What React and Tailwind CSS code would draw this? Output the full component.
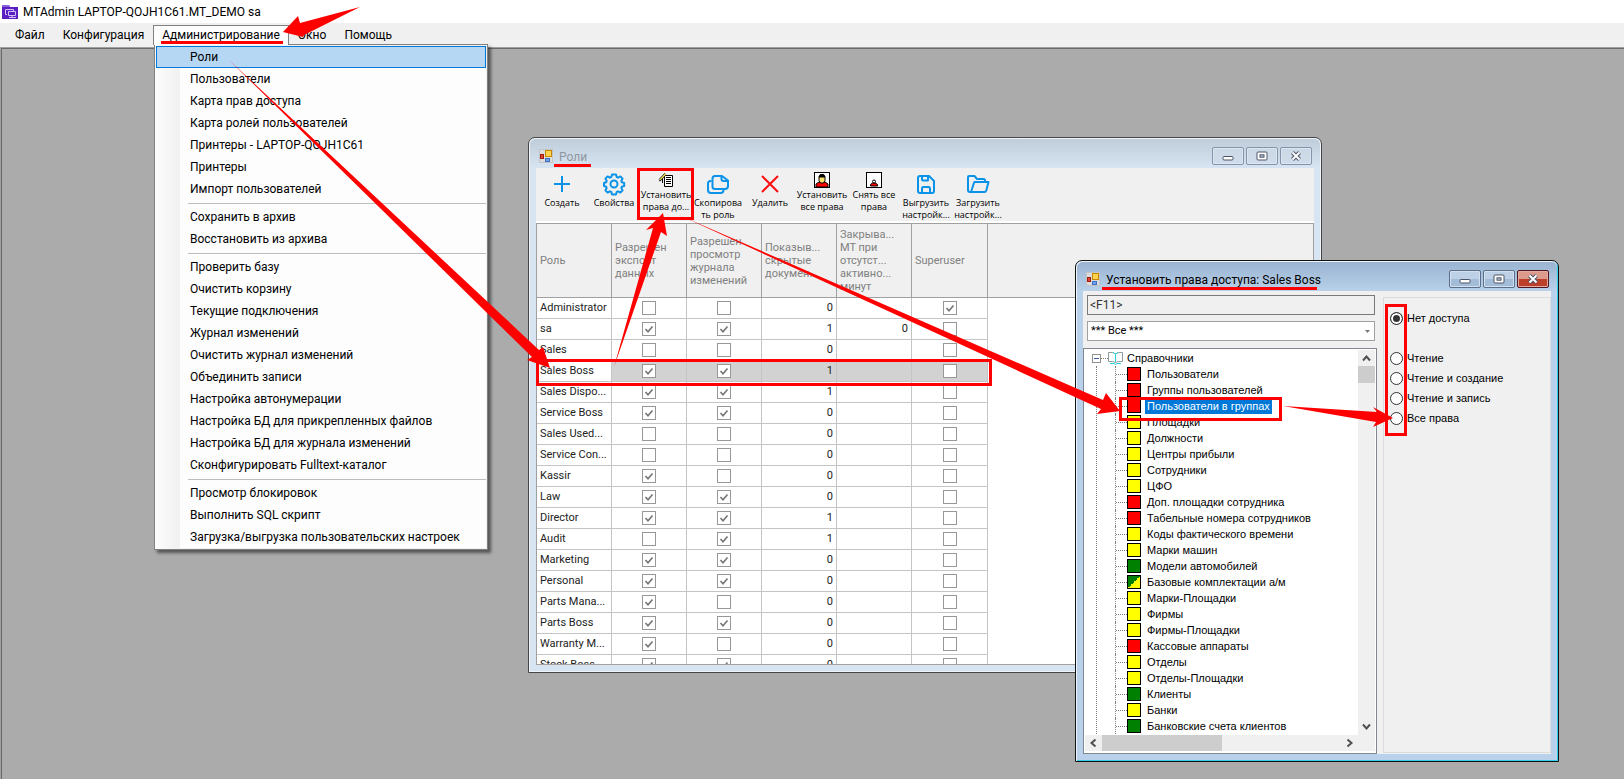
import clsx from 'clsx'

const MENUS = ['Файл', 'Конфигурация', 'Администрирование', 'Окно', 'Помощь']

const ADMIN_MENU = [
  [
    'Роли',
    'Пользователи',
    'Карта прав доступа',
    'Карта ролей пользователей',
    'Принтеры - LAPTOP-QOJH1C61',
    'Принтеры',
    'Импорт пользователей',
  ],
  ['Сохранить в архив', 'Восстановить из архива'],
  [
    'Проверить базу',
    'Очистить корзину',
    'Текущие подключения',
    'Журнал изменений',
    'Очистить журнал изменений',
    'Объединить записи',
    'Настройка автонумерации',
    'Настройка БД для прикрепленных файлов',
    'Настройка БД для журнала изменений',
    'Сконфигурировать Fulltext-каталог',
  ],
  ['Просмотр блокировок', 'Выполнить SQL скрипт', 'Загрузка/выгрузка пользовательских настроек'],
]

// name, export, journal, hidden docs, close after, superuser
const ROLES = [
  ['Administrator', false, false, '0', '', true],
  ['sa', true, true, '1', '0', false],
  ['Sales', false, false, '0', '', false],
  ['Sales Boss', true, true, '1', '', false],
  ['Sales Dispo...', true, true, '1', '', false],
  ['Service Boss', true, true, '0', '', false],
  ['Sales Used...', false, false, '0', '', false],
  ['Service Con...', false, false, '0', '', false],
  ['Kassir', true, false, '0', '', false],
  ['Law', true, true, '0', '', false],
  ['Director', true, true, '1', '', false],
  ['Audit', false, true, '1', '', false],
  ['Marketing', true, true, '0', '', false],
  ['Personal', true, true, '0', '', false],
  ['Parts Mana...', true, false, '0', '', false],
  ['Parts Boss', true, true, '0', '', false],
  ['Warranty M...', true, false, '0', '', false],
  ['Stock Boss', true, true, '0', '', false],
]

const COLUMNS = [
  ['Роль'],
  ['Разрешен', 'экспорт', 'данных'],
  ['Разрешен', 'просмотр', 'журнала', 'изменений'],
  ['Показыв...', 'скрытые', 'докумен...'],
  ['Закрыва...', 'МТ при', 'отсутст...', 'активно...', 'минут'],
  ['Superuser'],
]

const TREE = [
  ['Пользователи', 'red'],
  ['Группы пользователей', 'red'],
  ['Пользователи в группах', 'red'],
  ['Площадки', 'yellow'],
  ['Должности', 'yellow'],
  ['Центры прибыли', 'yellow'],
  ['Сотрудники', 'yellow'],
  ['ЦФО', 'yellow'],
  ['Доп. площадки сотрудника', 'red'],
  ['Табельные номера сотрудников', 'red'],
  ['Коды фактического времени', 'yellow'],
  ['Марки машин', 'yellow'],
  ['Модели автомобилей', 'green'],
  ['Базовые комплектации а/м', 'mixed'],
  ['Марки-Площадки', 'yellow'],
  ['Фирмы', 'yellow'],
  ['Фирмы-Площадки', 'yellow'],
  ['Кассовые аппараты', 'red'],
  ['Отделы', 'yellow'],
  ['Отделы-Площадки', 'yellow'],
  ['Клиенты', 'green'],
  ['Банки', 'yellow'],
  ['Банковские счета клиентов', 'green'],
]

const SWATCHES = {
  red: 'bg-[#ff0000]',
  yellow: 'bg-[#ffff00]',
  green: 'bg-[#008000]',
  mixed: 'bg-linear-to-br from-[#008000] from-50% to-[#ffff00] to-50%',
}

function AppIcon() {
  return (
    <svg width="16" height="14" viewBox="0 0 16 14" className="shrink-0">
      <path d="M0 0h7l1 2h8v12H0z" fill="#5a1fc0" />
      <path d="M0 0h7l1 2H0z" fill="#8a62dc" />
      <path d="M5 9.500H3.500v-5h8V6M6.500 6.500h7v4h-7zM10 10.500v2M7 12.500h7" fill="none" stroke="#d3c2f7" />
    </svg>
  )
}

function FormIcon() {
  return (
    <svg width="14" height="14" viewBox="0 0 14 14" className="shrink-0">
      <rect x=".5" y=".5" width="13" height="13" fill="#dcdcdc" stroke="#c4c4c4" />
      <rect x="6.500" y="1.500" width="6" height="6" fill="#ffd24d" stroke="#c58a00" />
      <rect x="1.500" y="5.500" width="3" height="4" fill="#e0442c" stroke="#9c1c10" />
      <rect x="6.500" y="9.500" width="4" height="3" fill="#6ea2ee" stroke="#3c6fc4" />
    </svg>
  )
}

function PlusIcon() {
  return (
    <svg width="24" height="24" viewBox="0 0 24 24" fill="none" stroke="#0a93e8" strokeWidth="2">
      <path d="M12 4v16M4 12h16" />
    </svg>
  )
}

function GearIcon() {
  return (
    <svg width="24" height="24" viewBox="0 0 24 24" fill="none" stroke="#0a93e8" strokeWidth="2" strokeLinejoin="round">
      <path d="M10 2.500h4l.7 2.600 1.400.6 2.300-1.300 2.200 2.200-1.300 2.300.6 1.400 2.300.7v3l-2.300.7-.6 1.400 1.300 2.300-2.200 2.200-2.300-1.300-1.400.6-.7 2.600h-4l-.7-2.600-1.400-.6-2.300 1.300-2.200-2.200 1.300-2.300-.6-1.400-2.100-.7v-3l2.100-.7.6-1.400-1.300-2.300 2.200-2.200 2.300 1.300 1.400-.6z" />
      <circle cx="12" cy="12" r="3.500" />
    </svg>
  )
}

function GrantIcon() {
  return (
    <svg width="16" height="16" viewBox="0 0 16 16">
      <path d="M6.500 3.500h8v11h-8z" fill="#fff" stroke="#000" />
      <path d="M8 5.500h5M8 7.500h5M8 9.500h5M8 11.500h5" stroke="#000" />
      <path d="M1.500 9 8 2.500" stroke="#000" strokeWidth="1.200" />
      <path d="M2 7.500 7.800 1.700" stroke="#ffe94d" strokeWidth="1.600" />
      <path d="M1 7.500 7 1.200" stroke="#000" strokeWidth=".8" />
      <path d="M4.500 7v4" stroke="#000" />
    </svg>
  )
}

function CopyIcon() {
  return (
    <svg width="24" height="24" viewBox="0 0 24 24" fill="none" stroke="#0a93e8" strokeWidth="2" strokeLinejoin="round">
      <path d="M9 4h7l6 4.500v5.500a3 3 0 0 1-3 3H9a2.500 2.500 0 0 1-2.500-2.500v-8A2.500 2.500 0 0 1 9 4z" />
      <path d="M15.500 4v3a2 2 0 0 0 2 2H22" />
      <path d="M5.500 9H4.500A2.500 2.500 0 0 0 2 11.500V18a3 3 0 0 0 3 3h9.500a3 3 0 0 0 3-3" />
    </svg>
  )
}

function DeleteIcon() {
  return (
    <svg width="24" height="24" viewBox="0 0 24 24" fill="none" stroke="#ff0f0f" strokeWidth="2">
      <path d="m4 4 16 16M20 4 4 20" />
    </svg>
  )
}

function AllRightsIcon() {
  return (
    <svg width="16" height="16" viewBox="0 0 16 16">
      <rect x=".5" y=".5" width="15" height="15" fill="#fff" stroke="#000" />
      <path d="M2 15v-3l3-2h6l3 2v3z" fill="#f00" stroke="#000" />
      <path d="M5 4.500 6.500 3h3L11 4.500v4L9.500 11h-3L5 8.500z" fill="#fbe26b" stroke="#000" />
      <path d="M5 5.500V3.500L6.500 2h3L11 3.500v2z" fill="#000" />
    </svg>
  )
}

function NoRightsIcon() {
  return (
    <svg width="16" height="16" viewBox="0 0 16 16">
      <rect x=".5" y=".5" width="15" height="15" fill="#fff" stroke="#000" />
      <path d="M4.500 14v-1.500L6.500 11h3l2 1.500V14z" fill="#f00" stroke="#000" />
      <circle cx="8" cy="9.500" r="1.500" fill="#fff" stroke="#000" />
    </svg>
  )
}

function SaveIcon() {
  return (
    <svg width="24" height="24" viewBox="0 0 24 24" fill="none" stroke="#0a93e8" strokeWidth="2" strokeLinejoin="round">
      <path d="M6 4h9l5 5v10a2 2 0 0 1-2 2H6a2 2 0 0 1-2-2V6a2 2 0 0 1 2-2z" />
      <path d="M8 4v3.500a1 1 0 0 0 1 1h5V4M8 21v-4.500a1.500 1.500 0 0 1 1.500-1.500h5a1.500 1.500 0 0 1 1.500 1.500V21" />
    </svg>
  )
}

function FolderIcon() {
  return (
    <svg width="24" height="24" viewBox="0 0 24 24" fill="none" stroke="#0a93e8" strokeWidth="2" strokeLinejoin="round">
      <path d="M5.500 20H4a2 2 0 0 1-2-2V5a1 1 0 0 1 1-1h5.500l2.500 3h6.500a1.500 1.500 0 0 1 1.500 1.500V10" />
      <path d="m5 20 3-9.200a1.200 1.200 0 0 1 1.200-.8H22.500l-2.200 8.500a2 2 0 0 1-2 1.500z" />
    </svg>
  )
}

const TOOLS = [
  { icon: <PlusIcon />, lines: ['Создать'] },
  { icon: <GearIcon />, lines: ['Свойства'] },
  { icon: <GrantIcon />, lines: ['Установить', 'права до...'] },
  { icon: <CopyIcon />, lines: ['Скопирова', 'ть роль'] },
  { icon: <DeleteIcon />, lines: ['Удалить'] },
  { icon: <AllRightsIcon />, lines: ['Установить', 'все права'] },
  { icon: <NoRightsIcon />, lines: ['Снять все', 'права'] },
  { icon: <SaveIcon />, lines: ['Выгрузить', 'настройк...'] },
  { icon: <FolderIcon />, lines: ['Загрузить', 'настройк...'] },
]

function WindowButtons({ active }) {
  const base = clsx(
    'flex h-[18px] w-8 items-center justify-center rounded-[2px] border',
    active
      ? 'border-[#5b6f8a] bg-linear-to-b from-[#bdd0e6] from-50% to-[#a3bcd8] to-50% shadow-[inset_0_0_0_1px_#d3e1f1]'
      : 'border-[#8593ab] bg-linear-to-b from-[#cbd8e5] to-[#d0dceb] shadow-[inset_0_0_0_1px_#dbe6f1]',
  )
  return (
    <div className="flex gap-[2px]">
      <button aria-label="Свернуть" className={base}>
        <svg width="12" height="10" viewBox="0 0 12 10">
          <rect x="1" y="5.500" width="10" height="3.500" rx="1" fill="#fff" stroke="#4d5466" />
        </svg>
      </button>
      <button aria-label="Развернуть" className={base}>
        <svg width="12" height="10" viewBox="0 0 12 10">
          <rect x="1" y="1" width="10" height="8" rx="1" fill="#fff" stroke="#4d5466" />
          <rect x="4" y="3.800" width="4" height="2.400" fill="#b7c8dc" stroke="#4d5466" />
        </svg>
      </button>
      <button
        aria-label="Закрыть"
        className={
          active
            ? 'flex h-[18px] w-8 items-center justify-center rounded-[2px] border border-[#4f1522] bg-linear-to-b from-[#dc9a8c] from-50% to-[#bc3f2a] to-50% shadow-[inset_0_0_0_1px_#e3aca0]'
            : base
        }
      >
        <svg width="12" height="10" viewBox="0 0 12 10">
          <path d="m2.500 1.500 7 7M9.500 1.500l-7 7" stroke="#4d5466" strokeWidth="4" />
          <path d="m2.500 1.500 7 7M9.500 1.500l-7 7" stroke="#fff" strokeWidth="2" />
        </svg>
      </button>
    </div>
  )
}

function Check({ checked, label }) {
  return (
    <span className="mx-auto grid size-[14px]">
      <input
        type="checkbox"
        defaultChecked={checked}
        aria-label={label}
        className="size-[14px] appearance-none border border-[#979797] bg-white [grid-area:1/1]"
      />
      {checked && (
        <svg viewBox="0 0 14 14" className="pointer-events-none size-[14px] [grid-area:1/1]">
          <path d="m3.500 7 2.500 2.800L10.500 4.500" fill="none" stroke="#757575" strokeWidth="1.600" />
        </svg>
      )}
    </span>
  )
}

function AdminDropdown() {
  return (
    <div
      role="menu"
      className="absolute top-[21px] left-[154px] z-30 w-[334px] border border-[#808080] bg-linear-to-r from-[#fcfcfc] to-[#f1f1f1] to-[24px] p-px shadow-[3px_3px_3px_rgba(0,0,0,0.5)]"
    >
      {ADMIN_MENU.map((group, i) => (
        <div key={i} className="ml-6 bg-[#fdfdfd]">
          {i > 0 && (
            <div className="flex h-[6px] items-center pl-2">
              <div className="h-px w-full bg-[#bdbdbd]" />
            </div>
          )}
          {group.map((item) => (
            <button
              key={item}
              role="menuitem"
              className={clsx(
                '-ml-6 flex h-[22px] w-[330px] items-center border pl-[33px] text-left whitespace-nowrap',
                item === 'Роли' ? 'border-[#0078d7] bg-[#b5d7f3]' : 'border-transparent',
              )}
            >
              {item}
            </button>
          ))}
        </div>
      ))}
    </div>
  )
}

function RolesWindow() {
  return (
    <section className="absolute top-[89px] left-[527px] flex h-[536px] w-[794px] flex-col rounded-t-[7px] border border-[#454545] bg-[#d7e4f2] px-[7px] pb-[7px] shadow-[inset_0_0_0_1px_#eff5fb]">
      <header className="-mx-[6px] mt-px flex h-[29px] items-center gap-1.5 rounded-t-[6px] bg-linear-to-b from-[#bfcddb] to-[#d7e4f2] pt-1 pr-2 pl-[9px] text-[#8f969e]">
        <FormIcon />
        <h2 className="flex-1 pt-0.5">Роли</h2>
        <WindowButtons />
      </header>

      <div className="flex h-[55px] shrink-0 border-b-2 border-white bg-[#f0f0f0] font-['Open_Sans','Noto_Sans',sans-serif] text-[9px] leading-3">
        {TOOLS.map(({ icon, lines }, i) => (
          <button key={i} className="flex w-[52px] flex-col items-center gap-px pt-1">
            {icon}
            <span className="whitespace-nowrap">
              {lines.map((line) => (
                <span key={line} className="block">
                  {line}
                </span>
              ))}
            </span>
          </button>
        ))}
      </div>

      <div className="min-h-0 flex-1 overflow-hidden border border-[#a0a0a0] bg-white text-[11px] text-[#222]">
        <table className="w-full table-fixed border-separate border-spacing-0">
          <colgroup>
            <col className="w-[75px]" />
            <col className="w-[75px]" />
            <col className="w-[75px]" />
            <col className="w-[75px]" />
            <col className="w-[75px]" />
            <col className="w-[76px]" />
            <col />
          </colgroup>
          <thead>
            <tr className="h-[74px] bg-[#f0f0f0] text-left leading-[13px] text-[#808080]">
              {COLUMNS.map((lines, i) => (
                <th key={i} scope="col" className="border-r border-b border-[#a0a0a0] p-0 pl-[3px] align-middle font-normal">
                  {lines.map((line) => (
                    <span key={line} className="block whitespace-nowrap">
                      {line}
                    </span>
                  ))}
                </th>
              ))}
              <td className="border-b border-[#a0a0a0]" />
            </tr>
          </thead>
          <tbody>
            {ROLES.map(([name, exp, journal, hidden, close, su]) => {
              const cell = clsx(
                'border-r border-b border-[#c4c4c4] p-0',
                name === 'Sales Boss' && 'bg-[#d2d2d2]',
              )
              return (
                <tr key={name} className="h-[21px] leading-4">
                  <td className="border-r border-b border-[#c4c4c4] p-0 pl-[3px] whitespace-nowrap">{name}</td>
                  <td className={cell}>
                    <Check checked={exp} label={`${name}: экспорт`} />
                  </td>
                  <td className={cell}>
                    <Check checked={journal} label={`${name}: журнал`} />
                  </td>
                  <td className={cell}>
                    <div className="pr-[3px] text-right">{hidden}</div>
                  </td>
                  <td className={cell}>
                    <div className="pr-[3px] text-right">{close}</div>
                  </td>
                  <td className={cell}>
                    <Check checked={su} label={`${name}: superuser`} />
                  </td>
                  <td />
                </tr>
              )
            })}
          </tbody>
        </table>
      </div>
    </section>
  )
}

function BookIcon() {
  return (
    <svg width="15" height="14" viewBox="0 0 15 14" className="shrink-0" fill="none">
      <path d="M.5 10.500v-9h4l3 1.500 3-1.500h4v9h-4l-3 1-3-1z" stroke="#8f9b9b" fill="#fff" />
      <path d="M7.500 3v8M2 12.500h4l1.500 1 1.500-1h4M5 1.500 7.500 3 10 1.500" stroke="#22d3dd" />
    </svg>
  )
}

function Chevron({ d }) {
  return (
    <svg width="17" height="16" viewBox="0 0 17 16" className="shrink-0" fill="none" stroke="#505050" strokeWidth="2">
      <path d={d} />
    </svg>
  )
}

function RightsTree() {
  return (
    <div className="flex min-h-0 flex-1 flex-col border border-[#828790] bg-white p-px pb-[2px]">
      <div className="flex min-h-0 flex-1">
        <ul role="tree" className="flex-1 overflow-hidden leading-4">
          <li role="treeitem" aria-expanded="true">
            <div className="flex h-4 items-center pl-[7px]">
              <span className="flex size-[9px] items-center justify-center border border-[#919191] bg-white">
                <span className="h-px w-[5px] bg-[#3b5ba5]" />
              </span>
              <span className="w-[7px] border-t border-dotted border-[#808080]" />
              <BookIcon />
              <span className="pl-1">Справочники</span>
            </div>
            <ul role="group" className="ml-[11px] border-l border-dotted border-[#808080] pl-[18px]">
              {TREE.map(([name, state]) => (
                <li
                  key={name}
                  role="treeitem"
                  className="flex h-4 items-center border-l border-dotted border-[#808080]"
                >
                  <span className="w-[11px] border-t border-dotted border-[#808080]" />
                  <span className={clsx('size-[14px] shrink-0 border border-black', SWATCHES[state])} />
                  <span
                    className={clsx(
                      'ml-1 px-[2px] whitespace-nowrap',
                      name === 'Пользователи в группах' && 'bg-[#0078d7] text-white',
                    )}
                  >
                    {name}
                  </span>
                </li>
              ))}
            </ul>
          </li>
        </ul>
        <div className="flex w-[17px] flex-col justify-between bg-[#f0f0f0]">
          <div>
            <Chevron d="m5 10.500 3.500-4 3.500 4" />
            <div className="h-[17px] bg-[#cdcdcd]" />
          </div>
          <Chevron d="m5 5.500 3.500 4 3.500-4" />
        </div>
      </div>
      <div className="flex h-4 shrink-0 items-center bg-[#f0f0f0] pr-[17px]">
        <Chevron d="m10.500 4.500-4 3.500 4 3.500" />
        <div className="h-full w-[120px] bg-[#cdcdcd]" />
        <div className="flex-1" />
        <Chevron d="m6.500 4.500 4 3.500-4 3.500" />
      </div>
    </div>
  )
}

function RightsDialog() {
  return (
    <section className="absolute top-[212px] left-[1074px] flex h-[502px] w-[484px] flex-col rounded-t-[7px] border border-[#111] bg-[#b9d1ea] px-[7px] pb-[7px] shadow-[inset_1px_1px_0_#eef5fc,inset_-1px_-1px_0_#2fd0ee]">
      <header className="-mx-[6px] mt-px flex h-[29px] items-center gap-1.5 rounded-t-[6px] bg-linear-to-b from-[#99b4d1] to-[#b9d1ea] pt-1 pr-2 pl-[9px]">
        <FormIcon />
        <h2 className="flex-1 pt-0.5">Установить права доступа: Sales Boss</h2>
        <WindowButtons active />
      </header>

      <div className="flex min-h-0 flex-1 bg-[#f0f0f0] font-['Liberation_Sans',Arial,sans-serif] text-[11px]">
        <div className="flex w-[294px] flex-col pt-1">
          <div className="mr-[2px] mb-[7px] ml-1 flex flex-col gap-1.5 font-[Roboto,'Open_Sans',sans-serif]">
            <input
              aria-label="Поиск"
              defaultValue="<F11>"
              className="h-5 border border-[#7a7a7a] bg-[#f0f0f0] px-[2px] text-[12px] text-[#333] outline-none"
            />
            <div className="grid">
              <select
                aria-label="Фильтр"
                className="h-5 appearance-none border border-[#a0a0a0] bg-white px-[3px] outline-none [grid-area:1/1]"
              >
                <option>*** Все ***</option>
              </select>
              <svg
                width="5"
                height="3"
                viewBox="0 0 5 3"
                className="pointer-events-none mr-[5px] self-center justify-self-end [grid-area:1/1]"
              >
                <path d="M0 0h5L2.500 3z" fill="#777" />
              </svg>
            </div>
          </div>
          <RightsTree />
        </div>

        <fieldset className="mt-1.5 mb-px ml-1.5 flex flex-1 flex-col border border-[#dcdcdc] pt-2.5 pl-1.5 leading-5">
          {['Нет доступа', 'Чтение', 'Чтение и создание', 'Чтение и запись', 'Все права'].map((label, i) => (
            <label key={label} className={clsx('flex h-5 items-center gap-1', i === 0 && 'mb-5')}>
              <input
                type="radio"
                name="access"
                defaultChecked={i === 0}
                className="size-[13px] appearance-none rounded-full border border-[#333] bg-white checked:bg-[#333] checked:shadow-[inset_0_0_0_2px_#fff]"
              />
              {label}
            </label>
          ))}
        </fieldset>
      </div>
    </section>
  )
}

// Red training marks drawn over the whole desktop
function Annotations() {
  return (
    <svg
      width="1624"
      height="779"
      viewBox="0 0 1624 779"
      className="pointer-events-none absolute top-0 left-0 z-40 max-w-none"
      fill="#f00"
    >
      <rect x="161" y="41" width="122" height="3" />
      <rect x="554" y="164" width="37" height="3" />
      <rect x="1102" y="287" width="215" height="3" />
      <g fill="none" stroke="#f00" strokeWidth="3">
        <rect x="638.500" y="169.500" width="54" height="49" />
        <rect x="537.500" y="360.500" width="453" height="24" />
        <rect x="1120.500" y="398.500" width="160" height="21" />
        <rect x="1386.500" y="305.500" width="19" height="129" />
      </g>
      <path d="M360 7 300 23 298 16 283 32 303 37 304 35 318 28z" />
      <path d="M228 59 539 350 543 347 550 368 527 360 532 357z" />
      <path d="M614 367 653 228 646 230 663 213 667 236 661 232z" />
      <path d="M679 215 1103 400 1106 393 1120 411 1097 414 1101 409z" />
      <path d="M1283 406 1377 412 1373 407 1393 418 1373 427 1376 422z" />
    </svg>
  )
}

export default function App() {
  return (
    <div className="relative flex min-h-screen flex-col overflow-hidden bg-[#ababab] font-[Roboto,'Open_Sans',sans-serif] text-[12px] leading-4 text-black">
      <header className="flex h-[23px] items-center gap-[5px] bg-white pl-[2px]">
        <AppIcon />
        <h1>MTAdmin LAPTOP-QOJH1C61.MT_DEMO sa</h1>
      </header>

      <div className="relative">
        <nav className="flex h-6 items-start bg-[#f0f0f0] pt-[2px] pl-1.5">
          {MENUS.map((menu) => (
            <button
              key={menu}
              className={clsx(
                'h-5 border border-b-0 px-2 pb-0.5',
                menu === 'Администрирование'
                  ? 'relative z-40 border-[#808080] bg-[#fdfdfd]'
                  : 'border-transparent',
              )}
            >
              {menu}
            </button>
          ))}
        </nav>
        <AdminDropdown />
      </div>

      <main className="relative flex-1 border-t border-l border-[#a0a0a0] shadow-[inset_1px_1px_0_#696969]">
        <RolesWindow />
        <RightsDialog />
      </main>

      <Annotations />
    </div>
  )
}
